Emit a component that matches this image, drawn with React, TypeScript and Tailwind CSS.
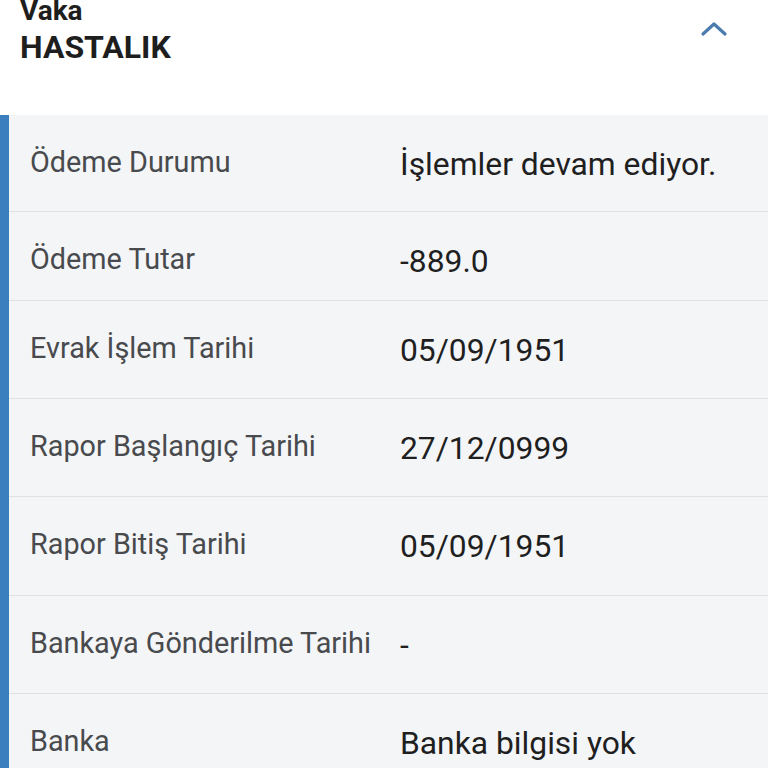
import React from "react";

const rows: { label: string; value: string; h: string }[] = [
  { label: "Ödeme Durumu", value: "İşlemler devam ediyor.", h: "h-[97px]" },
  { label: "Ödeme Tutar", value: "-889.0", h: "h-[89px]" },
  { label: "Evrak İşlem Tarihi", value: "05/09/1951", h: "h-[98px]" },
  { label: "Rapor Başlangıç Tarihi", value: "27/12/0999", h: "h-[98px]" },
  { label: "Rapor Bitiş Tarihi", value: "05/09/1951", h: "h-[99px]" },
  { label: "Bankaya Gönderilme Tarihi", value: "-", h: "h-[98px]" },
  { label: "Banka", value: "Banka bilgisi yok", h: "h-[98px]" },
];

export default function App() {
  return (
    <div
      className="w-[768px] h-[768px] overflow-hidden bg-white"
      style={{ fontFamily: "Roboto, 'Noto Sans', sans-serif" }}
    >
      <div className="h-[115px] flex justify-between pl-[20px] pr-[40px]">
        <div className="flex flex-col mt-[-4px]">
          <div className="text-[28px] leading-[30px] font-bold text-[#1e1e1e]">Vaka</div>
          <div className="text-[32px] leading-[36px] font-bold text-[#1e1e1e] mt-[3px]">HASTALIK</div>
        </div>
        <div className="pt-[20px]">
          <svg width="28" height="18" viewBox="0 0 28 18">
            <path d="M3 14 L14 4 L25 14" fill="none" stroke="#4a7cad" strokeWidth="3.2" strokeLinecap="round" strokeLinejoin="round" />
          </svg>
        </div>
      </div>
      <div className="flex">
        <div className="w-[9px] shrink-0 bg-[#3c7fbf]" />
        <div className="flex-1 bg-[#f4f5f7]">
          {rows.map((r, i) => (
            <div
              key={i}
              className={`${r.h} flex border-b border-[#dfe1e4] pl-[21px]`}
            >
              <div className="w-[370px] shrink-0 pt-[33px] text-[28.8px] leading-[29px] text-[#484a4d]">
                {r.label}
              </div>
              <div className="pt-[33px] text-[31.8px] leading-[32px] text-[#1f1f1f]">
                {r.value}
              </div>
            </div>
          ))}
        </div>
      </div>
    </div>
  );
}
